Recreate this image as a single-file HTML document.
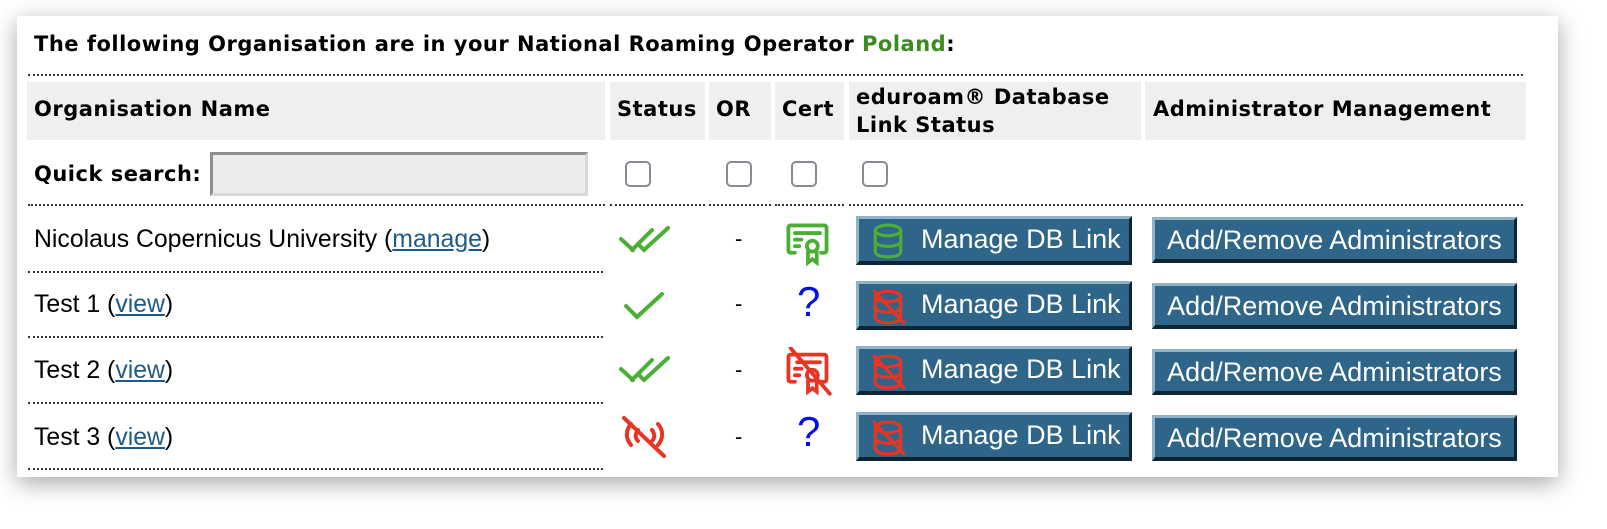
<!DOCTYPE html>
<html><head><meta charset="utf-8"><style>
*{margin:0;padding:0;box-sizing:border-box}
body{width:1607px;height:529px;background:#fff;position:relative;overflow:hidden;font-family:"DejaVu Sans",sans-serif}
.card{position:absolute;left:17px;top:16px;width:1541px;height:461px;background:#fff;box-shadow:0 6px 22px rgba(0,0,0,.35)}
.a{position:absolute}
.b{font-weight:bold;font-size:21px;letter-spacing:0.5px;color:#000;white-space:nowrap}
.hd{position:absolute;top:82px;height:58px;background:#efefef}
.dot{position:absolute;height:0;border-top:2px dotted #333}
.t{font-family:"Liberation Sans",sans-serif;font-size:24.8px;color:#000;white-space:nowrap}
.t a{color:#1f5b8a;text-decoration:underline}
.cb{position:absolute;width:26px;height:26px;border:2px solid #8a8a95;border-radius:5px;top:161px;background:#fff}
.btn{position:absolute;background:#2e6589;color:#fff;font-family:"Liberation Sans",sans-serif;font-size:27px;border-top:3px solid #8fb4c9;border-left:3px solid #8fb4c9;border-right:3px solid #0e2533;border-bottom:4px solid #0e2533;white-space:nowrap;line-height:40px}
.db{left:856px;width:276px;height:49px;padding-left:62px}
.db svg{position:absolute;left:12px;top:4px}
.ad{left:1152px;width:365px;height:46px;text-align:center;line-height:40px}
.dash{position:absolute;left:735px;font-family:"Liberation Sans",sans-serif;font-size:22px}
.q{position:absolute;left:797px;font-family:"Liberation Sans",sans-serif;font-size:42px;color:#0010e8;line-height:42px}
</style></head><body>
<div class="card"></div>
<div class="a b" style="left:34px;top:32px">The following Organisation are in your National Roaming Operator <span style="color:#3d8a22">Poland</span>:</div>
<div class="dot" style="left:28px;top:74px;width:1495px"></div>
<div class="hd" style="left:27px;width:578px"></div>
<div class="hd" style="left:610px;width:95px"></div>
<div class="hd" style="left:709px;width:62px"></div>
<div class="hd" style="left:775px;width:69px"></div>
<div class="hd" style="left:849px;width:292px"></div>
<div class="hd" style="left:1145px;width:381px"></div>
<div class="a b" style="left:34px;top:97px">Organisation Name</div>
<div class="a b" style="left:617px;top:97px">Status</div>
<div class="a b" style="left:716px;top:97px">OR</div>
<div class="a b" style="left:782px;top:97px">Cert</div>
<div class="a b" style="left:856px;top:83px;line-height:28px">eduroam® Database<br>Link Status</div>
<div class="a b" style="left:1153px;top:97px">Administrator Management</div>
<div class="a b" style="left:34px;top:162px">Quick search:</div>
<div class="a" style="left:210px;top:152px;width:378px;height:44px;background:#ececec;border-top:3px solid #8f8f8f;border-left:3px solid #8f8f8f;border-right:3px solid #d8d8d8;border-bottom:3px solid #d8d8d8"></div>
<div class="cb" style="left:625px"></div>
<div class="cb" style="left:726px"></div>
<div class="cb" style="left:791px"></div>
<div class="cb" style="left:862px"></div>
<div class="dot" style="left:28px;top:204px;width:577px"></div>
<div class="dot" style="left:610px;top:204px;width:95px"></div>
<div class="dot" style="left:709px;top:204px;width:62px"></div>
<div class="dot" style="left:775px;top:204px;width:69px"></div>
<div class="dot" style="left:849px;top:204px;width:674px"></div>

<div class="a t" style="left:34px;top:226px">Nicolaus Copernicus University (<a>manage</a>)</div>
<div class="a t" style="left:34px;top:291px">Test 1 (<a>view</a>)</div>
<div class="a t" style="left:34px;top:357px">Test 2 (<a>view</a>)</div>
<div class="a t" style="left:34px;top:424px">Test 3 (<a>view</a>)</div>
<div class="dot" style="left:28px;top:271px;width:575px"></div>
<div class="dot" style="left:28px;top:336px;width:575px"></div>
<div class="dot" style="left:28px;top:402px;width:575px"></div>
<div class="dot" style="left:28px;top:468px;width:575px"></div>

<svg class="a" style="left:618px;top:222px" width="56" height="36" viewBox="0 0 56 36" fill="none" stroke="#4caf35" stroke-width="4" stroke-linecap="round"><path d="M3 17l12 11M14 28L34 8M20 22l6 6L50 6"/></svg>
<svg class="a" style="left:622px;top:288px" width="46" height="36" viewBox="0 0 46 36" fill="none" stroke="#4caf35" stroke-width="4" stroke-linecap="round"><path d="M4 18l11 11L40 6"/></svg>
<svg class="a" style="left:618px;top:352px" width="56" height="36" viewBox="0 0 56 36" fill="none" stroke="#4caf35" stroke-width="4" stroke-linecap="round"><path d="M3 17l12 11M14 28L34 8M20 22l6 6L50 6"/></svg>
<svg class="a" style="left:620px;top:414px" width="52" height="44" viewBox="0 0 52 44" fill="none" stroke="#e83423" stroke-width="4" stroke-linecap="round"><path d="M4 4l40 38M11 10c-6 7-5 15 0 21M18 16c-3 4-3 8 0 11M38 10c6 7 5 15 0 21M32 16c3 4 3 8 0 11"/></svg>

<div class="dash" style="top:226px">-</div>
<div class="dash" style="top:291px">-</div>
<div class="dash" style="top:357px">-</div>
<div class="dash" style="top:424px">-</div>

<svg class="a" style="left:784px;top:220px" width="48" height="48" viewBox="0 0 44 44" fill="none" stroke="#4caf35" stroke-width="3.5" stroke-linecap="round"><path d="M10 30H6a2 2 0 0 1-2-2V7a2 2 0 0 1 2-2h31a2 2 0 0 1 2 2v21a2 2 0 0 1-2 2h-3"/><path d="M10 12h23M10 18h6M10 24h4"/><circle cx="26" cy="24" r="5"/><path d="M22 29v10l4-3 4 3V29"/></svg>
<div class="q" style="top:281px">?</div>
<svg class="a" style="left:784px;top:347px" width="48" height="50" viewBox="0 0 44 46" fill="none" stroke="#e83423" stroke-width="3.5" stroke-linecap="round"><path d="M10 32H6a2 2 0 0 1-2-2V9a2 2 0 0 1 2-2h31a2 2 0 0 1 2 2v21a2 2 0 0 1-2 2h-3"/><path d="M12 14h21M10 20h6M10 26h4"/><circle cx="26" cy="26" r="5"/><path d="M22 31v10l4-3 4 3V31"/><path d="M6 1l36 42"/></svg>
<div class="q" style="top:411px">?</div>

<div class="btn db" style="top:216px"><svg width="34" height="36" viewBox="0 0 32 34" fill="none" stroke="#4caf35" stroke-width="3"><ellipse cx="16" cy="7" rx="12" ry="5"/><path d="M4 7v20c0 3 5 5 12 5s12-2 12-5V7M4 17c0 3 5 5 12 5s12-2 12-5"/></svg>Manage DB Link</div>
<div class="btn db" style="top:281px"><svg width="36" height="38" viewBox="0 0 34 36" fill="none" stroke="#e83423" stroke-width="3"><ellipse cx="16" cy="8" rx="12" ry="5"/><path d="M4 8v20c0 3 5 5 12 5s12-2 12-5V8M4 18c0 3 5 5 12 5s12-2 12-5M2 2l30 32"/></svg>Manage DB Link</div>
<div class="btn db" style="top:346px"><svg width="36" height="38" viewBox="0 0 34 36" fill="none" stroke="#e83423" stroke-width="3"><ellipse cx="16" cy="8" rx="12" ry="5"/><path d="M4 8v20c0 3 5 5 12 5s12-2 12-5V8M4 18c0 3 5 5 12 5s12-2 12-5M2 2l30 32"/></svg>Manage DB Link</div>
<div class="btn db" style="top:412px"><svg width="36" height="38" viewBox="0 0 34 36" fill="none" stroke="#e83423" stroke-width="3"><ellipse cx="16" cy="8" rx="12" ry="5"/><path d="M4 8v20c0 3 5 5 12 5s12-2 12-5V8M4 18c0 3 5 5 12 5s12-2 12-5M2 2l30 32"/></svg>Manage DB Link</div>

<div class="btn ad" style="top:217px">Add/Remove Administrators</div>
<div class="btn ad" style="top:283px">Add/Remove Administrators</div>
<div class="btn ad" style="top:349px">Add/Remove Administrators</div>
<div class="btn ad" style="top:415px">Add/Remove Administrators</div>
</body></html>
